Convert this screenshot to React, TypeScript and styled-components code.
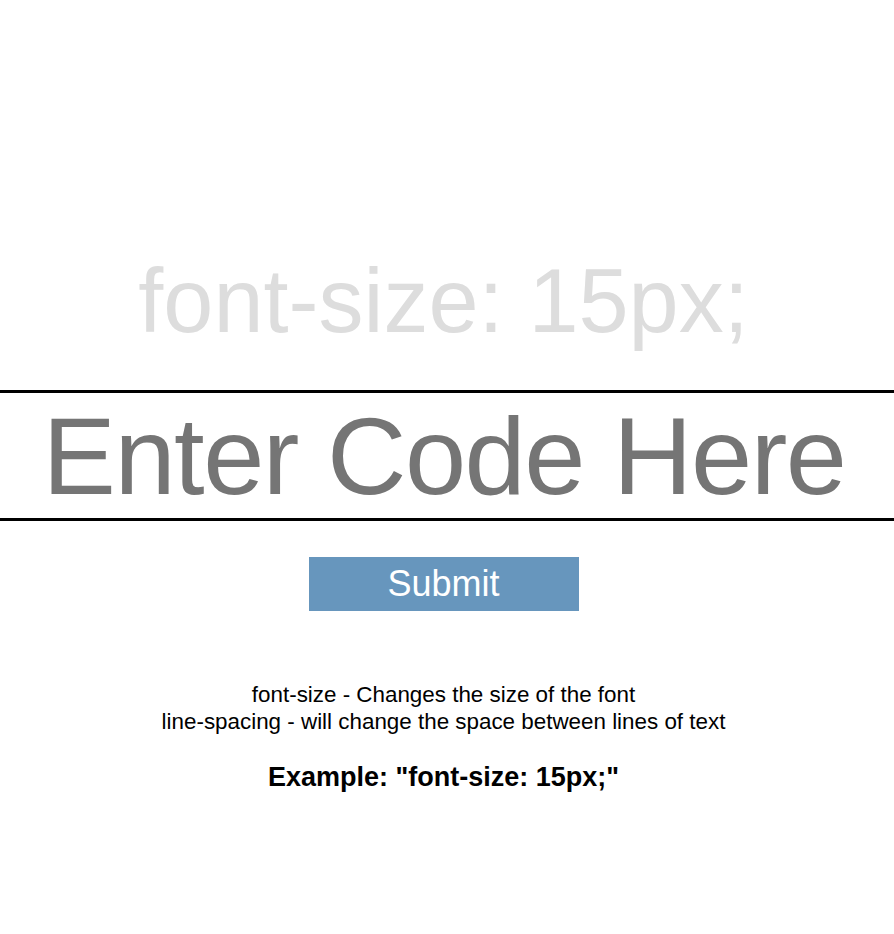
import { useState } from 'react';
import styled, { createGlobalStyle } from 'styled-components';

const GlobalStyle = createGlobalStyle`
  html, body {
    margin: 0;
    padding: 0;
    background: #ffffff;
  }
  body {
    font-family: 'Liberation Sans', Arial, sans-serif;
  }
`;

const Page = styled.main`
  display: flex;
  flex-direction: column;
  align-items: stretch;
  width: 894px;
  min-height: 934px;
  padding-top: 250px;
  box-sizing: border-box;
`;

const Preview = styled.h1`
  margin: 0 7px 0 0;
  font-size: 90px;
  font-weight: 400;
  line-height: normal;
  color: #dddddd;
  text-align: center;
  white-space: nowrap;
`;

const CodeInput = styled.input`
  display: block;
  width: 100%;
  height: 131px;
  margin: 37px 0 0;
  padding: 0 6px 0 0;
  box-sizing: border-box;
  border: none;
  border-top: 3px solid #000000;
  border-bottom: 3px solid #000000;
  outline: none;
  background: transparent;
  font-family: 'Liberation Sans', Arial, sans-serif;
  font-size: 110px;
  letter-spacing: -1.5px;
  color: #333333;
  text-align: center;

  &::placeholder {
    color: #757575;
  }
`;

const SubmitButton = styled.button`
  align-self: center;
  width: 270px;
  height: 54px;
  margin: 36px 7px 0 0;
  padding: 0;
  border: none;
  background: #6796bd;
  color: #ffffff;
  font-family: 'Liberation Sans', Arial, sans-serif;
  font-size: 36px;
  cursor: pointer;
`;

const Notes = styled.p`
  margin: 70px 7px 0 0;
  font-size: 22.4px;
  line-height: 27px;
  color: #000000;
  text-align: center;
`;

const ExampleLine = styled.p`
  margin: 27px 7px 0 0;
  font-size: 27px;
  font-weight: 700;
  line-height: normal;
  color: #000000;
  text-align: center;
`;

export default function App() {
  const [code, setCode] = useState('');

  return (
    <>
      <GlobalStyle />
      <Page>
        <Preview>font-size: 15px;</Preview>
        <CodeInput
          type='text'
          value={code}
          placeholder='Enter Code Here'
          onChange={(e) => setCode(e.target.value)}
        />
        <SubmitButton type='button'>Submit</SubmitButton>
        <Notes>
          font-size - Changes the size of the font
          <br />
          line-spacing - will change the space between lines of text
        </Notes>
        <ExampleLine>Example: "font-size: 15px;"</ExampleLine>
      </Page>
    </>
  );
}
